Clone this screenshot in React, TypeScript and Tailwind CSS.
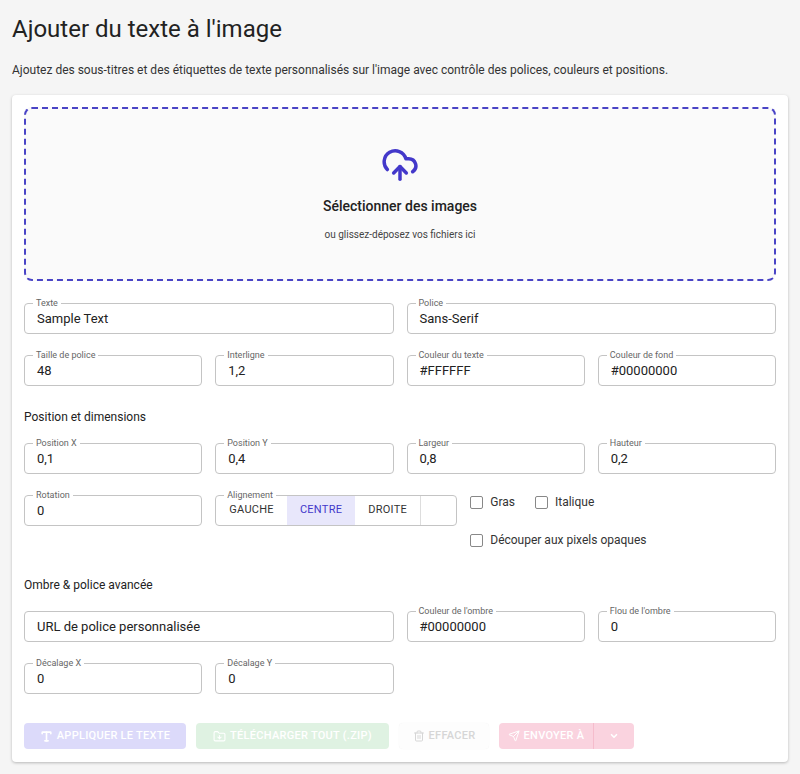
import React from 'react';
import { CloudUpload, Send, ChevronDown, Trash2, FolderDown, Type } from 'lucide-react';

function Field({ label, value, className = '' }: { label: string; value: string; className?: string }) {
  return (
    <div className={`relative h-[31px] rounded border border-[#c4c4c4] bg-white px-3 flex items-center ${className}`}>
      {label && (
        <span className="absolute -top-[7px] left-[8px] bg-white px-[3px] text-[9px] leading-[12px] text-[#666]">{label}</span>
      )}
      <span className="text-[13px] text-[#222]">{value}</span>
    </div>
  );
}

function Check({ label }: { label: string }) {
  return (
    <label className="flex items-center gap-[7px] text-[12px] text-[#333]">
      <span className="w-[13px] h-[13px] rounded-[2px] border border-[#888]" />
      {label}
    </label>
  );
}

export default function App() {
  return (
    <div className="min-h-[774px] bg-[#f5f5f5] px-3 pt-[14px] font-[Roboto,sans-serif]">
      <h1 className="text-[24px] leading-[30px] text-[#222]">Ajouter du texte à l'image</h1>
      <p className="mt-[17px] text-[12px] text-[#333]">
        Ajoutez des sous-titres et des étiquettes de texte personnalisés sur l'image avec contrôle des polices, couleurs et positions.
      </p>
      <div className="mt-[16px] bg-white rounded shadow-[0_1px_3px_rgba(0,0,0,0.25)] p-3 pb-[13px]">
        <div className="h-[174px] rounded-lg border-2 border-dashed border-[#4a44c6] bg-[#fafafa] flex flex-col items-center justify-center">
          <CloudUpload className="w-[38px] h-[38px] text-[#4338ca]" strokeWidth={2.2} />
          <div className="mt-[12px] text-[14px] font-medium text-[#222]">Sélectionner des images</div>
          <div className="mt-[10px] text-[10px] text-[#444]">ou glissez-déposez vos fichiers ici</div>
        </div>

        <div className="mt-[22px] grid grid-cols-4 gap-x-[13px] gap-y-[21px]">
          <Field className="col-span-2" label="Texte" value="Sample Text" />
          <Field className="col-span-2" label="Police" value="Sans-Serif" />
          <Field label="Taille de police" value="48" />
          <Field label="Interligne" value="1,2" />
          <Field label="Couleur du texte" value="#FFFFFF" />
          <Field label="Couleur de fond" value="#00000000" />
        </div>

        <div className="mt-[22px] text-[12px] text-[#222]">Position et dimensions</div>

        <div className="mt-[17px] grid grid-cols-4 gap-x-[13px] gap-y-[21px]">
          <Field label="Position X" value="0,1" />
          <Field label="Position Y" value="0,4" />
          <Field label="Largeur" value="0,8" />
          <Field label="Hauteur" value="0,2" />
          <Field label="Rotation" value="0" />
          <div className="col-span-3 flex items-start">
            <div className="relative h-[31px] w-[242px] shrink-0 rounded border border-[#c4c4c4] flex">
              <span className="absolute -top-[7px] left-[8px] bg-white px-[3px] text-[9px] leading-[12px] text-[#666]">Alignement</span>
              <span className="flex items-center px-[13px] text-[11px] tracking-wide text-[#333]">GAUCHE</span>
              <span className="flex items-center px-[13px] text-[11px] tracking-wide text-[#4338ca] bg-[#e8e7fb]">CENTRE</span>
              <span className="flex items-center px-[13px] text-[11px] tracking-wide text-[#333] border-r border-[#ddd]">DROITE</span>
            </div>
            <div className="ml-[13px] -mt-[2px] flex flex-col gap-[20px]">
              <div className="flex gap-[20px]">
                <Check label="Gras" />
                <Check label="Italique" />
              </div>
              <Check label="Découper aux pixels opaques" />
            </div>
          </div>
        </div>

        <div className="mt-[27px] text-[12px] text-[#222]">Ombre &amp; police avancée</div>

        <div className="mt-[17px] grid grid-cols-4 gap-x-[13px] gap-y-[21px]">
          <Field className="col-span-2" label="" value="URL de police personnalisée" />
          <Field label="Couleur de l'ombre" value="#00000000" />
          <Field label="Flou de l'ombre" value="0" />
          <Field label="Décalage X" value="0" />
          <Field label="Décalage Y" value="0" />
        </div>

        <div className="mt-[29px] flex gap-[10px] text-[11px] font-medium tracking-wide">
          <button className="h-[26px] w-[162px] justify-center rounded bg-[#dcdafa] text-white flex items-center gap-1">
            <Type className="w-[13px] h-[13px]" strokeWidth={3} />APPLIQUER LE TEXTE
          </button>
          <button className="h-[26px] w-[193px] justify-center rounded bg-[#dff2e2] text-white flex items-center gap-1">
            <FolderDown className="w-[13px] h-[13px]" />TÉLÉCHARGER TOUT (.ZIP)
          </button>
          <button className="h-[26px] w-[90px] justify-center rounded bg-[#fdfdfd] shadow-[0_0_1px_rgba(0,0,0,0.08)] text-[#d6d6d6] flex items-center gap-1">
            <Trash2 className="w-[12px] h-[12px]" />EFFACER
          </button>
          <div className="flex h-[26px] rounded bg-[#fad3df] text-white">
            <button className="w-[95px] justify-center flex items-center gap-1 border-r border-[#f5bccc]">
              <Send className="w-[12px] h-[12px]" />ENVOYER À
            </button>
            <button className="w-[40px] justify-center flex items-center"><ChevronDown className="w-[10px] h-[10px]" strokeWidth={4} /></button>
          </div>
        </div>
      </div>
    </div>
  );
}
